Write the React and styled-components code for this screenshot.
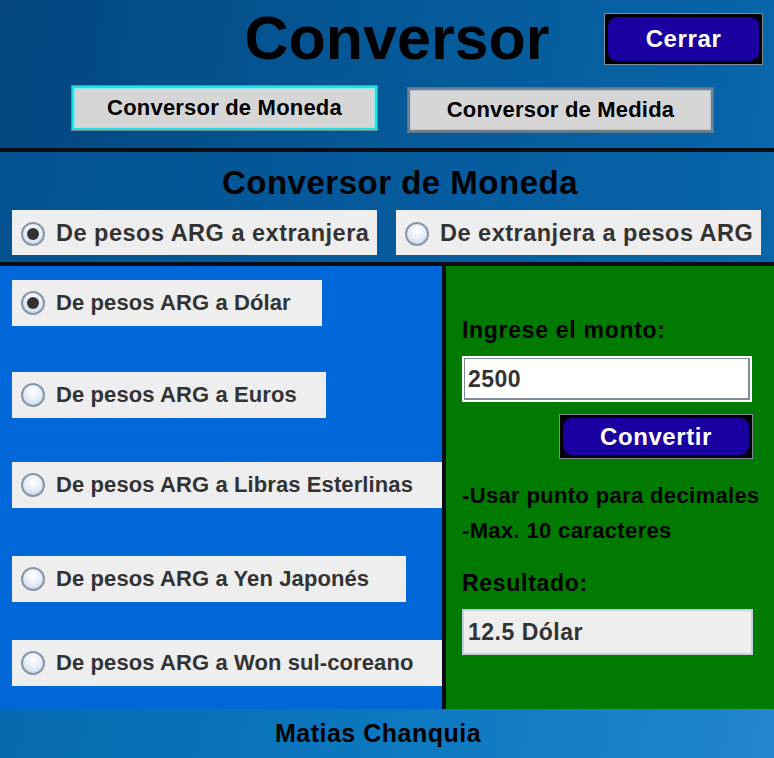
import React from 'react';
import styled, { createGlobalStyle } from 'styled-components';

const GlobalStyle = createGlobalStyle`
  html, body {
    margin: 0;
    padding: 0;
    background: #0a6fb5;
  }
  body {
    font-family: "Liberation Sans", Arial, sans-serif;
  }
`;

const Frame = styled.div`
  width: 774px;
  height: 758px;
  display: flex;
  flex-direction: column;
  overflow: hidden;
`;

const Header = styled.header`
  height: 148px;
  background: linear-gradient(100deg, #03467f 0%, #055795 45%, #0866aa 100%);
  display: flex;
  flex-direction: column;
`;

const TitleRow = styled.div`
  display: grid;
  grid-template-columns: 1fr auto 1fr;
  align-items: start;
  height: 78px;
`;

const BigTitle = styled.h1`
  grid-column: 2;
  margin: 0;
  padding-left: 20px;
  font-size: 61px;
  font-weight: bold;
  line-height: 76px;
  color: #000;
`;

const DarkButton = styled.button`
  justify-self: end;
  align-self: ${p => p.$align || 'auto'};
  width: ${p => p.$w}px;
  height: ${p => p.$h}px;
  margin: ${p => p.$m};
  padding: 0;
  border: 1px solid #7f8c98;
  background: #000;
  display: flex;
  cursor: pointer;
  font-family: "Liberation Sans", Arial, sans-serif;

  span {
    flex: 1;
    margin: 3px;
    border-radius: 9px;
    background: #1a00a0;
    color: #fff;
    font-size: 24px;
    font-weight: bold;
    letter-spacing: 0.6px;
    display: flex;
    align-items: center;
    justify-content: center;
  }
`;

const TabRow = styled.div`
  display: flex;
  gap: 31px;
  padding-left: 72px;
  align-items: flex-start;
  margin-top: 8px;
`;

const TabButton = styled.button`
  width: 305px;
  height: 44px;
  margin-top: ${p => (p.$active ? 0 : 2)}px;
  background: #d6d6d6;
  border: ${p => (p.$active ? '2px solid #24e0e0' : '2px solid #6f8090')};
  outline: 1px solid ${p => (p.$active ? '#6f8a96' : '#5d7586')};
  outline-offset: 0;
  box-shadow: ${p => (p.$active ? 'inset 0 0 0 1px #8cf0f0' : 'inset 0 0 0 1px #b8c2ca')};
  font-family: "Liberation Sans", Arial, sans-serif;
  font-size: 22px;
  font-weight: bold;
  letter-spacing: 0.2px;
  color: #000;
  cursor: pointer;
  padding: 0;
`;

const Divider = styled.div`
  height: 4px;
  background: #0a0d14;
  flex-shrink: 0;
`;

const ModeSection = styled.section`
  height: 110px;
  background: linear-gradient(100deg, #03528f 0%, #055a9c 50%, #0866ab 100%);
  display: flex;
  flex-direction: column;
  align-items: center;
`;

const SectionTitle = styled.h2`
  margin: 0;
  height: 58px;
  line-height: 62px;
  font-size: 33px;
  font-weight: bold;
  color: #000;
  letter-spacing: 0.5px;
  padding-left: 26px;
`;

const ModeRow = styled.div`
  display: flex;
  gap: 19px;
  align-self: stretch;
  padding-left: 12px;
`;

const OptionBox = styled.label`
  display: flex;
  align-items: center;
  gap: 11px;
  box-sizing: border-box;
  width: ${p => p.$w}px;
  height: ${p => p.$h || 46}px;
  margin-top: ${p => p.$mt || 0}px;
  padding-left: 9px;
  padding-top: ${p => (p.$fs ? 2 : 0)}px;
  background: #eeeeee;
  color: #333;
  font-size: ${p => p.$fs || 22}px;
  font-weight: bold;
  letter-spacing: ${p => (p.$fs ? 0.5 : 0.1)}px;
  white-space: nowrap;
  flex-shrink: 0;
`;

const Radio = styled.span`
  position: relative;
  width: 20px;
  height: 20px;
  border-radius: 50%;
  border: 2px solid #8797a8;
  background: radial-gradient(circle at 50% 35%, #ffffff 0%, #e9eff7 45%, #bccfe6 100%);
  flex-shrink: 0;

  &::after {
    content: '';
    display: ${p => (p.$on ? 'block' : 'none')};
    position: absolute;
    left: 4px;
    top: 4px;
    width: 12px;
    height: 12px;
    border-radius: 50%;
    background: #333;
  }
`;

const Main = styled.main`
  height: 443px;
  display: flex;
`;

const ChoicePanel = styled.div`
  width: 442px;
  background: #0067d9;
  display: flex;
  flex-direction: column;
  padding-left: 12px;
  box-sizing: border-box;
`;

const VLine = styled.div`
  width: 4px;
  background: #0a0d14;
`;

const CalcPanel = styled.div`
  flex: 1;
  background: #007a00;
  display: flex;
  flex-direction: column;
  padding-left: 16px;
  padding-right: 21px;
  overflow: hidden;
`;

const Label = styled.div`
  font-size: 23px;
  font-weight: bold;
  color: #000;
  letter-spacing: 0.7px;
  margin-top: ${p => p.$mt}px;
  line-height: 26px;
  white-space: nowrap;
`;

const Hint = styled(Label)`
  font-size: 22px;
  letter-spacing: 0.35px;
`;

const Field = styled.div`
  box-sizing: border-box;
  height: 46px;
  margin-top: ${p => p.$mt}px;
  width: ${p => p.$w}px;
  background: ${p => (p.$ro ? '#eeeeee' : '#fff')};
  border: 2px solid ${p => (p.$ro ? '#c2d0e0' : '#fff')};
  box-shadow: ${p => (p.$ro ? 'none' : 'inset 1px 1px 0 #7f8c98, inset -2px -2px 0 #7f8c98')};
  display: flex;
  align-items: center;
  padding-left: 4px;
  font-size: 23px;
  font-weight: bold;
  color: #333;
  letter-spacing: 0.5px;
`;

const Footer = styled.footer`
  flex: 1;
  background: linear-gradient(100deg, #066aae 0%, #0b78bf 50%, #2286cc 100%);
  display: flex;
  align-items: center;
  justify-content: center;
  font-size: 25px;
  font-weight: bold;
  color: #000;
  letter-spacing: 0.5px;
  padding-right: 18px;
`;

const choices = [
  { text: 'De pesos ARG a Dólar', w: 310, mt: 14, on: true },
  { text: 'De pesos ARG a Euros', w: 314, mt: 46 },
  { text: 'De pesos ARG a Libras Esterlinas', w: 430, mt: 44 },
  { text: 'De pesos ARG a Yen Japonés', w: 394, mt: 48 },
  { text: 'De pesos ARG a Won sul-coreano', w: 430, mt: 38 },
];

export default function App() {
  return (
    <Frame>
      <GlobalStyle />
      <Header>
        <TitleRow>
          <BigTitle>Conversor</BigTitle>
          <DarkButton $w={159} $h={52} $m="13px 11px 0 0">
            <span>Cerrar</span>
          </DarkButton>
        </TitleRow>
        <TabRow>
          <TabButton $active>Conversor de Moneda</TabButton>
          <TabButton>Conversor de Medida</TabButton>
        </TabRow>
      </Header>
      <Divider />
      <ModeSection>
        <SectionTitle>Conversor de Moneda</SectionTitle>
        <ModeRow>
          <OptionBox $w={365} $h={45} $fs={23.5}>
            <Radio $on />
            De pesos ARG a extranjera
          </OptionBox>
          <OptionBox $w={365} $h={45} $fs={23.5}>
            <Radio />
            De extranjera a pesos ARG
          </OptionBox>
        </ModeRow>
      </ModeSection>
      <Divider />
      <Main>
        <ChoicePanel>
          {choices.map(c => (
            <OptionBox key={c.text} $w={c.w} $mt={c.mt}>
              <Radio $on={c.on} />
              {c.text}
            </OptionBox>
          ))}
        </ChoicePanel>
        <VLine />
        <CalcPanel>
          <Label $mt={51}>Ingrese el monto:</Label>
          <Field $mt={13} $w={290}>2500</Field>
          <DarkButton $w={194} $h={45} $m="12px 0 0 0" $align="flex-end">
            <span>Convertir</span>
          </DarkButton>
          <Hint $mt={24}>-Usar punto para decimales</Hint>
          <Hint $mt={9}>-Max. 10 caracteres</Hint>
          <Label $mt={26}>Resultado:</Label>
          <Field $mt={13} $w={291} $ro>12.5 Dólar</Field>
        </CalcPanel>
      </Main>
      <Footer>Matias Chanquia</Footer>
    </Frame>
  );
}
